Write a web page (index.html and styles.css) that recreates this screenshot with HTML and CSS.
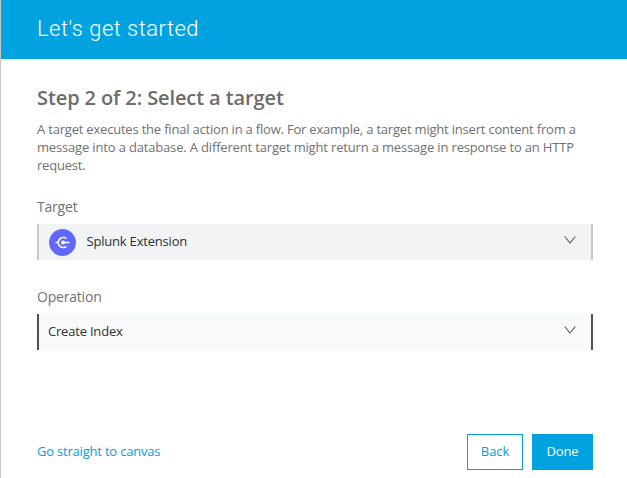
FILE: index.html
```html
<!DOCTYPE html>
<html lang="en">
<head>
<meta charset="utf-8">
<title>Let's get started</title>
<link rel="stylesheet" href="styles.css">
</head>
<body>
<div class="dialog">
  <header class="header"><h1>Let's get started</h1></header>
  <main class="content">
    <h2>Step 2 of 2: Select a target</h2>
    <p class="description"><span>A target executes the final action in a flow. For example, a target might insert content from a</span><br><span class="second-line">message into a database. A different target might return a message in response to an HTTP</span><br><span>request.</span></p>
    <div class="field">
      <div class="label">Target</div>
      <div class="select select-target">
        <svg class="logo" viewBox="0 0 27 27"><circle cx="13.5" cy="13.5" r="13.4" fill="#5f68fa"/><path d="M17.300 9.500A5 5 0 1 0 17.300 17.500M6.500 13.500h2.500M14 13.500h6.500" fill="none" stroke="#fff" stroke-width="1.6"/><circle cx="14" cy="13.500" r="2" fill="#fff"/></svg>
        <span class="value">Splunk Extension</span>
        <svg class="chevron" viewBox="0 0 12 8"><path d="M.7.5 6 7 11.300.5" fill="none" stroke="#505153" stroke-width="1.1"/></svg>
      </div>
    </div>
    <div class="field field-operation">
      <div class="label">Operation</div>
      <div class="select select-operation">
        <span class="value">Create Index</span>
        <svg class="chevron" viewBox="0 0 12 8"><path d="M.7.5 6 7 11.300.5" fill="none" stroke="#505153" stroke-width="1.1"/></svg>
      </div>
    </div>
  </main>
  <footer class="footer">
    <a class="skip">Go straight to canvas</a>
    <button class="button back">Back</button>
    <button class="button done">Done</button>
  </footer>
</div>
</body>
</html>
```
FILE: styles.css
```css
* { box-sizing: border-box; }
body { margin: 0; font-family: "Open Sans", sans-serif; font-size: 13px; letter-spacing: -0.2px; color: #707173; background: #fff; }
.dialog { height: 478px; display: flex; flex-direction: column; border-left: 1px solid #c5c6c8; overflow: hidden; }
.header { height: 59px; flex: none; padding: 12px 36px; background: #00a2df; color: #fff; }
h1 { margin: 0; font: 300 22px/34px Roboto, sans-serif; letter-spacing: 0.46px; }
.content { padding: 25px 34px 0 36px; }
h2 { margin: 0; font-size: 20px; line-height: 27px; font-weight: 600; letter-spacing: -0.1px; color: #6b6c6d; }
.description { margin: 9px 0 0; line-height: 18px; white-space: nowrap; }
.second-line { letter-spacing: -0.165px; }
.field { margin-top: 23px; }
.field-operation { margin-top: 27px; }
.label { font-size: 14px; line-height: 20px; }
.select { margin-top: 7px; height: 36px; display: flex; align-items: center; padding: 0 15px 0 9px; border: solid #c6c7c9; border-width: 0 2px; background: #f2f3f5; color: #303133; }
.select-operation { border-color: #505153; background: #f8f9fb; }
.value { padding-bottom: 2px; }
.logo { width: 27px; height: 27px; margin: 0 10.5px 0 1px; }
.chevron { width: 12px; height: 8px; margin: 0 0 4px auto; }
.footer { margin-top: auto; height: 44px; padding: 0 34px 8px 36px; display: flex; align-items: center; gap: 9px; }
.skip { margin-right: auto; padding-bottom: 2px; color: #00a2df; }
.button { height: 36px; font: 500 13px "Open Sans", sans-serif; letter-spacing: -0.1px; border: 1px solid #00a2df; padding: 0 0 2px; }
.back { width: 56px; background: #fff; color: #00a2df; }
.done { width: 61px; background: #00a2df; color: #fff; }
```
